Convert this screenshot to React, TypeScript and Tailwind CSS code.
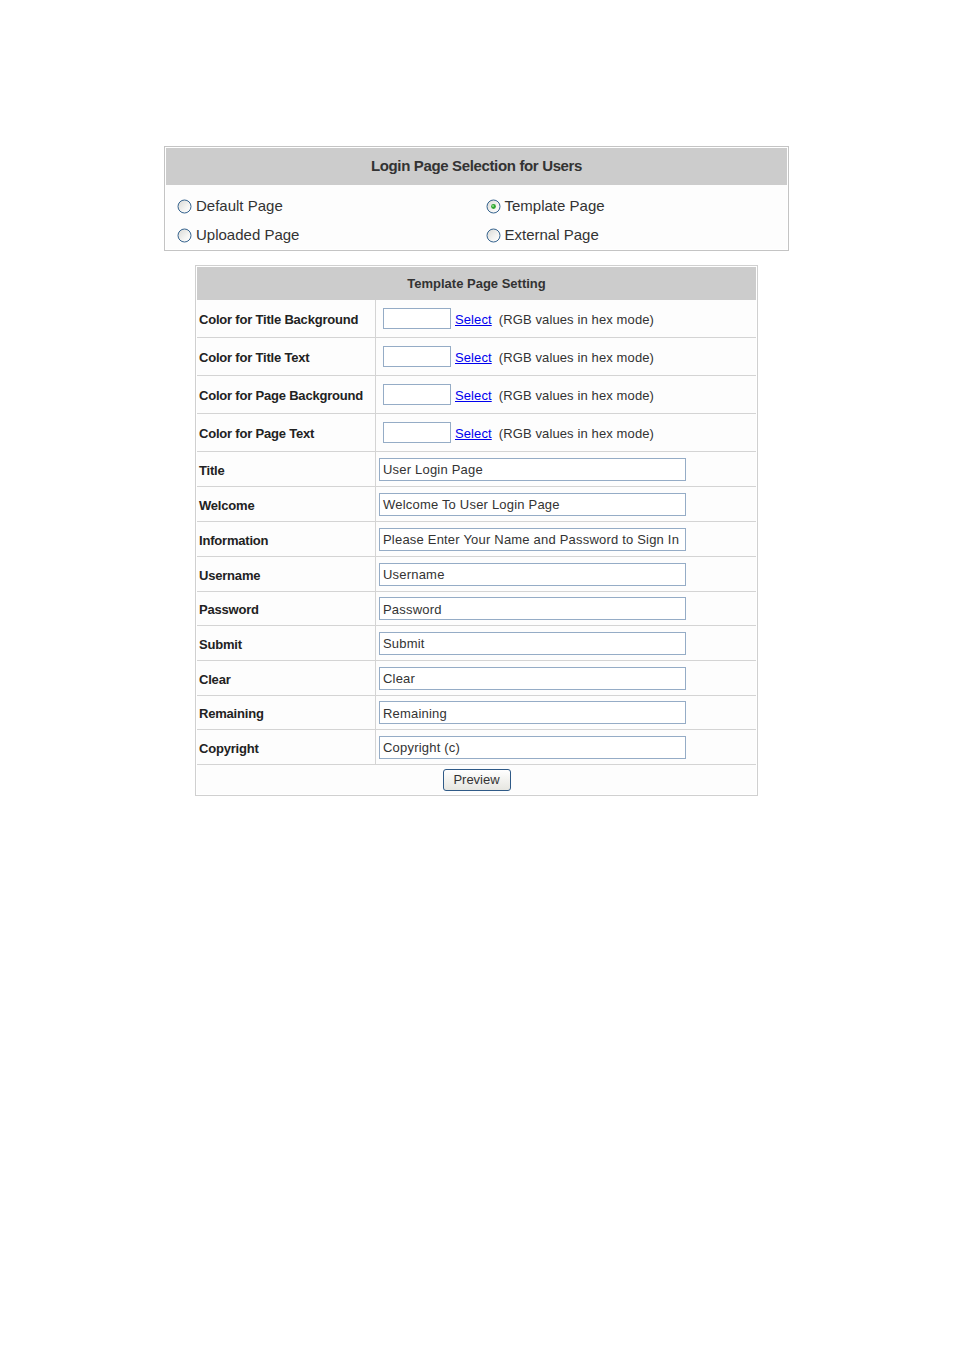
import React from "react";

function Radio({ checked }: { checked?: boolean }) {
  return (
    <svg width="15" height="15" viewBox="0 0 15 15" className="shrink-0">
      <defs>
        <linearGradient id={checked ? "rg1" : "rg0"} x1="0" y1="0" x2="1" y2="1">
          <stop offset="0" stopColor="#d8d8d4" />
          <stop offset="0.6" stopColor="#f4f4f2" />
          <stop offset="1" stopColor="#ffffff" />
        </linearGradient>
      </defs>
      <circle cx="7.5" cy="7.5" r="6.5" fill={`url(#${checked ? "rg1" : "rg0"})`} stroke="#36648f" strokeWidth="1" />
      {checked && <circle cx="7.5" cy="7.5" r="2.4" fill="#2fa52f" />}
      {checked && <circle cx="7" cy="7" r="1" fill="#8fe08f" />}
    </svg>
  );
}

function RadioItem({ label, checked, h }: { label: string; checked?: boolean; h: string }) {
  return (
    <div className={`flex items-center ${h} gap-[4px] text-[15px] text-[#333]`}>
      <Radio checked={checked} />
      <span>{label}</span>
    </div>
  );
}

const colorRows = [
  "Color for Title Background",
  "Color for Title Text",
  "Color for Page Background",
  "Color for Page Text",
];

const textRows: { label: string; value: string; h: string }[] = [
  { label: "Title", value: "User Login Page", h: "h-[35px]" },
  { label: "Welcome", value: "Welcome To User Login Page", h: "h-[35px]" },
  { label: "Information", value: "Please Enter Your Name and Password to Sign In", h: "h-[35px]" },
  { label: "Username", value: "Username", h: "h-[35px]" },
  { label: "Password", value: "Password", h: "h-[34px]" },
  { label: "Submit", value: "Submit", h: "h-[35px]" },
  { label: "Clear", value: "Clear", h: "h-[35px]" },
  { label: "Remaining", value: "Remaining", h: "h-[34px]" },
  { label: "Copyright", value: "Copyright (c)", h: "h-[35px]" },
];

export default function App() {
  return (
    <div
      className="min-h-[1351px] bg-white pt-[146px]"
      style={{ fontFamily: '"Liberation Sans", Arial, sans-serif' }}
    >
      {/* Login Page Selection */}
      <div className="w-[625px] ml-[164px] border border-[#c4c4c4] p-px bg-white">
        <div className="h-[37px] bg-[#cccccc] flex items-center justify-center text-[15px] font-bold text-[#333] tracking-[-0.35px]">
          Login Page Selection for Users
        </div>
        <div className="grid grid-cols-2 pt-[7px] bg-[#fdfdfd]">
          <div className="pl-[11px]">
            <RadioItem label="Default Page" h="h-[29px]" />
            <RadioItem label="Uploaded Page" h="h-[28px]" />
          </div>
          <div className="pl-[9px]">
            <RadioItem label="Template Page" checked h="h-[29px]" />
            <RadioItem label="External Page" h="h-[28px]" />
          </div>
        </div>
      </div>

      {/* Template Page Setting */}
      <div className="w-[563px] ml-[195px] mt-[14px] border border-[#d0d0d0] p-px bg-white">
        <div className="h-[33px] bg-[#cccccc] flex items-center justify-center text-[13px] font-bold text-[#333]">
          Template Page Setting
        </div>
        {colorRows.map((label) => (
          <div key={label} className="flex h-[38px] border-b border-[#d4d4d4] bg-[#fdfdfd]">
            <div className="w-[179px] shrink-0 border-r border-[#d4d4d4] flex items-center pl-[2px] pt-[3px] text-[13px] font-bold text-[#222] tracking-[-0.2px]">
              {label}
            </div>
            <div className="flex items-center pl-[7px] text-[13px]">
              <div className="w-[68px] h-[21px] border border-[#95acc6] bg-white" />
              <a href="#" className="ml-[4px] pt-[3px] text-[#0000ee] underline tracking-[0.1px]">
                Select
              </a>
              <span className="ml-[7px] pt-[3px] text-[#333] tracking-[0.12px]">(RGB values in hex mode)</span>
            </div>
          </div>
        ))}
        {textRows.map((r) => (
          <div key={r.label} className={`flex ${r.h} border-b border-[#d4d4d4] bg-[#fdfdfd]`}>
            <div className="w-[179px] shrink-0 border-r border-[#d4d4d4] flex items-center pl-[2px] pt-[3px] text-[13px] font-bold text-[#222] tracking-[-0.2px]">
              {r.label}
            </div>
            <div className="flex items-center pl-[3px]">
              <div className="w-[307px] h-[23px] border border-[#95acc6] bg-white flex items-center px-[3px] pt-[2px] text-[13px] text-[#333] tracking-[0.2px] whitespace-nowrap overflow-hidden">
                {r.value}
              </div>
            </div>
          </div>
        ))}
        <div className="h-[29px] flex items-center justify-center bg-[#fdfdfd]">
          <button className="w-[68px] h-[22px] rounded-[3px] border border-[#2f5a87] bg-gradient-to-b from-white to-[#e6e6e0] text-[13px] text-[#333] flex items-center justify-center pt-px">
            Preview
          </button>
        </div>
      </div>
    </div>
  );
}
